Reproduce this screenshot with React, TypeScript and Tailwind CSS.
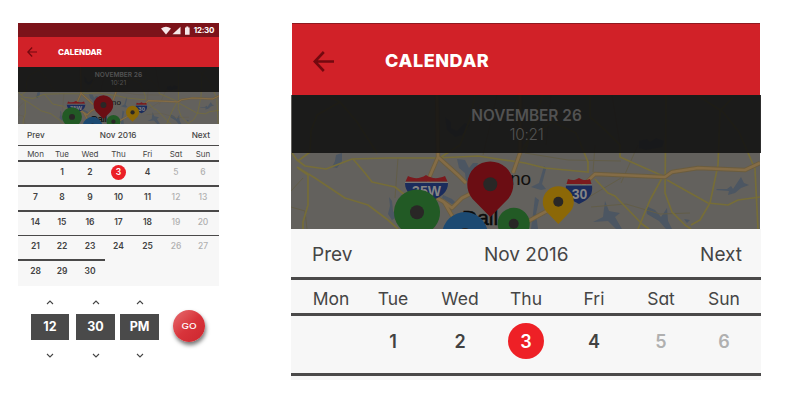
import React from "react";
import clsx from "clsx";

const WEEKDAYS = ["Mon", "Tue", "Wed", "Thu", "Fri", "Sat", "Sun"];
const WEEKS: (number | null)[][] = [
  [null, 1, 2, 3, 4, 5, 6],
  [7, 8, 9, 10, 11, 12, 13],
  [14, 15, 16, 17, 18, 19, 20],
  [21, 22, 23, 24, 25, 26, 27],
  [28, 29, 30, null, null, null, null],
];

const HIGHWAYS =
  "M146 0l1 62-9 21-3 14 18 10 14 24M147 62l20 18 8 8M229 0v58l-7 20M153 107l8 6 10-10 12-6M234 128l20-11 23-12 27-26 70 3 7-5 26-4 47 2 15-7";

function Pin({ x, y, r, tip, fill, dot }: { x: number; y: number; r: number; tip: number; fill: string; dot: number }) {
  return (
    <g>
      <path
        d={`M${x} ${tip}L${x - r * 0.78} ${y + r * 0.63}A${r} ${r} 0 1 1 ${x + r * 0.78} ${y + r * 0.63}Z`}
        fill={fill}
      />
      <circle cx={x} cy={y} r={dot} fill="#292726" />
    </g>
  );
}

function RoadMap({ className }: { className?: string }) {
  return (
    <svg viewBox="0 0 469 134" preserveAspectRatio="none" className={clsx("block", className)}>
      <rect width="469" height="134" fill="#63615d" />
      <g fill="#4c5662">
        <path d="M45 60l6-2v8l-5 7-5-1 3-6z" />
        <path d="M166 64l8 1 4 8 4-5 5 0-4 11-3 10-5-3-1-8-6-5z" />
        <path d="M98 102l3 4 1 10 4 6-5 3-4-6 2-8z" />
        <path d="M152 100l9 4 4 4-4 1-10-6z" />
        <path d="M253 71l2 3-4 15 4 5-5 1-10-3 8-4z" />
        <path d="M244 102l4 3-3 14 2 15h-7l2-15z" />
        <path d="M314 106l4 10 5 1 6 1-5 4 7 12h-6l-8-8-15 1 10-5z" />
        <path d="M355 111l9 4 6 7 6-9 1 13 4 8h-6l-7-8-12-7z" />
        <path d="M426 94l10 0 4-3 2 3 8-12 3 6 5 2-8 3-6 5-7 2 1-4-13-1z" />
        <path d="M393 124l6 1-3 3z" />
        <path d="M154 22l6 5v6l6 3 8-8 5 2-8 10-7 2-8-7z" />
        <path d="M348 46l8-2 3 3 6-4 8 3-2 6-16 3-7-2z" />
      </g>
      <g fill="none" stroke="#625d48" strokeWidth="1">
        <path d="M0 112l14 4 2 18M107 63l-3 40M304 50l-2 27M347 50l-17 38M300 112l35-3 34 10 30-1M206 0l-14 60M260 0l-5 50M321 0l8 50M0 96l12-13M330 83l-44 26M234 58l43 7 53 1" />
      </g>
      <g fill="none" stroke="#766d38" strokeWidth="1.700" strokeLinejoin="round">
        <path d="M1 58l5 7 8 6 21 3 26-10 36-1h48" />
        <path d="M6 72l18 11 30 20 23 7 20 15 10 9" />
        <path d="M7 73l10 7v30l-5 17v7" />
        <path d="M62 64l12 14 7 9 23 5 15 12" />
        <path d="M39 2l10 5 17 20 20 31M49 7l-23 13-6 16-1 21-12 9" />
        <path d="M184 0l-5 24-10 26-22 14M229 58l10-16 22-15 24 11 12 29v11" />
        <path d="M147 63l40-2 47 7 20 5 42 4M252 0l-9 26-9 32" />
        <path d="M299 0v22l15 13 15 15v12l18 8 25 11" />
        <path d="M375 0l-1 98 7 19 13 13 6 4M371 83l-12 22-12 29M304 84l13 14 7 3 27 28 7 5" />
        <path d="M376 85l41 23 20 2 10-5 22-3" />
        <path d="M406 0l26 17 16 20 16 37 3 60M442 2l-13 14-2 54-8 38-10 17-9 5" />
      </g>
      <g fill="none" strokeLinejoin="round">
        <path d={HIGHWAYS} stroke="#6c5d3e" strokeWidth="4.400" />
        <path d={HIGHWAYS} stroke="#846c46" strokeWidth="2.600" />
      </g>
      <text x="219" y="89.5" fontSize="19" fill="#11100f" fontFamily="Liberation Sans, sans-serif">no</text>
      <text x="171" y="130" fontSize="21" stroke="#0b0b0b" strokeWidth=".5" fill="#0b0b0b" fontFamily="Liberation Sans, sans-serif">Dall</text>
      <g>
        <path d="M114 88h43c0 9-6 14-21.500 20C120 102 114 97 114 88z" fill="#1b2c5c" />
        <path d="M114.500 86.500l2.500-5.500c6 3 12 3 18-1 6 4 12 4 19 1l2.500 5.500z" fill="#7a1a1e" />
        <path d="M114 87.500h43" stroke="#777" strokeWidth="1" />
        <text x="135.500" y="101" fontSize="14" fontWeight="700" textAnchor="middle" fill="#858585" fontFamily="Liberation Sans, sans-serif">35W</text>
      </g>
      <g>
        <path d="M275 90h26c1 9-2 14-13 19-11-5-14-10-13-19z" fill="#1b2c5c" />
        <path d="M275.500 89l1.500-5c4 2 8 1 11-1 3 2 7 3 11 1l1.500 5z" fill="#7a1a1e" />
        <path d="M275 90h26" stroke="#777" strokeWidth="1" />
        <text x="288.500" y="103.500" fontSize="14" fontWeight="700" textAnchor="middle" fill="#858585" fontFamily="Liberation Sans, sans-serif">30</text>
      </g>
      <Pin x={174} y={140} r={23} tip={172} fill="#1c4a72" dot={7} />
      <Pin x={222.7} y={128.700} r={16} tip={150} fill="#225a25" dot={5} />
      <Pin x={126} y={117.300} r={23} tip={150} fill="#225a25" dot={7} />
      <Pin x={267.300} y={106.700} r={15.500} tip={129} fill="#8c6807" dot={5} />
      <Pin x={199.300} y={89.300} r={23} tip={122} fill="#6b0d13" dot={7} />
    </svg>
  );
}

function BackArrow({ className }: { className?: string }) {
  return (
    <svg viewBox="0 0 21 21" className={className} fill="none" stroke="#73090f" strokeWidth="2.600">
      <path d="M10.800 1L1.800 10.500l9 9.500M1.800 10.500H21" />
    </svg>
  );
}

function Chevron({ down }: { down?: boolean }) {
  return (
    <svg viewBox="0 0 8 5" className={clsx("block h-[5px] w-2", down && "rotate-180")} fill="none" stroke="#454545" strokeWidth="1.100">
      <path d="M1 4l3-3 3 3" />
    </svg>
  );
}

function Rule({ className }: { className: string }) {
  return <div className={clsx("shrink-0 bg-[#4a4949]", className)} />;
}

function SmallWeek({ days }: { days: (number | null)[] }) {
  return (
    <div className="grid h-[23px] grid-cols-[27px_26px_30px_27px_31px_26px_28px] pl-1 text-center text-[8.500px] leading-[21px] font-semibold text-[#424242]">
      {days.map((d, i) => (
        <span key={i} className={clsx("flex h-[21px] items-center justify-center", i > 4 && "font-medium text-[#b0b0b0]")}>
          {d === 3 ? (
            <span className="flex size-[15px] items-center justify-center rounded-full bg-[#eb2027] text-white">3</span>
          ) : (
            d
          )}
        </span>
      ))}
    </div>
  );
}

function Phone() {
  return (
    <section className="flex h-[263px] w-[201px] flex-col bg-[#f7f7f7]">
      <div className="flex h-[14px] shrink-0 items-center justify-end bg-[#7c131a] pr-[5px] text-white">
        <svg viewBox="0 0 30 9" className="mr-[3px] h-[9px] w-[30px]" fill="#f6e9ea">
          <path d="M0 2.600Q5 -1.200 10 2.600L5 8.500z" />
          <path d="M19.500 .8v7.500H11.500z" />
          <path d="M24 1.500h1.300V.5h2v1h1.300v7.200H24z" />
        </svg>
        <span className="text-[8px] leading-[14px] font-bold tracking-[-0.3px]">12:30</span>
      </div>
      <div className="flex h-[30px] shrink-0 items-center bg-[#d12128] pl-[9px]">
        <BackArrow className="size-[10px]" />
        <h2 className="ml-[21px] text-[8px] font-extrabold tracking-[-0.05px] text-white">CALENDAR</h2>
      </div>
      <div className="relative h-[57px] shrink-0">
        <RoadMap className="h-[57px] w-[201px]" />
        <div className="absolute inset-x-0 top-0 flex h-[25px] flex-col items-center bg-[#111111]/88 pt-1 text-[6.600px] leading-[8px] text-[#525252]">
          <span className="font-semibold">NOVEMBER 26</span>
          <span>10:21</span>
        </div>
      </div>
      <div className="flex h-[21px] shrink-0 items-center justify-between pt-px pr-[9px] pl-[9px] text-[8.200px] font-medium text-[#454545]">
        <span>Prev</span>
        <span>Nov 2016</span>
        <span>Next</span>
      </div>
      <Rule className="h-px" />
      <div className="grid h-[14px] shrink-0 grid-cols-[27px_26px_30px_27px_31px_26px_28px] pl-1 text-center text-[8px] leading-[16px] text-[#454545]">
        {WEEKDAYS.map((d) => (
          <span key={d}>{d}</span>
        ))}
      </div>
      <Rule className="h-0.5" />
      <SmallWeek days={WEEKS[0]} />
      <Rule className="h-0.5" />
      <SmallWeek days={WEEKS[1]} />
      <Rule className="h-0.5" />
      <SmallWeek days={WEEKS[2]} />
      <Rule className="h-px" />
      <SmallWeek days={WEEKS[3]} />
      <Rule className="h-0.5 w-[87px]" />
      <SmallWeek days={WEEKS[4]} />
    </section>
  );
}

function TimePicker() {
  return (
    <section className="flex h-[60px] w-[201px] items-center pl-[13px] text-[12.500px] font-bold text-white">
      {[
        { v: "12", c: "w-[38px] mr-[7px]" },
        { v: "30", c: "w-[39px] mr-[5px]" },
        { v: "PM", c: "w-[39px] mr-[14px]" },
      ].map(({ v, c }) => (
        <div key={v} className={clsx("flex h-[60px] flex-col items-center pt-0.5", c)}>
          <Chevron />
          <span className="mt-[9px] mb-[13px] flex h-[26px] w-full items-center justify-center bg-[#4a4a4a] pt-px">{v}</span>
          <Chevron down />
        </div>
      ))}
      <button className="flex size-8 -translate-y-[2px] items-center justify-center rounded-full bg-linear-to-br from-[#e66a70] via-[#d8343b] to-[#cc252d] text-[8px] font-medium shadow-[1px_3px_4px_rgba(0,0,0,0.55)]">
        <span className="scale-x-125">GO</span>
      </button>
    </section>
  );
}

function LargeView() {
  return (
    <section className="flex h-[357px] w-[470px] flex-col">
      <div className="mr-px ml-px flex h-[72px] shrink-0 items-center border-t border-[#8e1a20] bg-[#d12128] pl-[21px]">
        <BackArrow className="mt-1 size-[21px]" />
        <h1 className="mt-0.5 ml-[51px] text-[18px] font-extrabold tracking-[0.600px] text-white">CALENDAR</h1>
      </div>
      <div className="relative h-[134px] shrink-0">
        <RoadMap className="h-[134px] w-[469px]" />
        <div className="absolute top-0 right-0 left-px flex h-[58px] flex-col items-center bg-[#111111]/88 pt-[11px] text-[15.400px] leading-[19px] text-[#525252]">
          <span className="font-semibold">NOVEMBER 26</span>
          <span className="font-light tracking-[-0.3px]">10:21</span>
        </div>
      </div>
      <div className="flex h-[48px] shrink-0 items-center justify-between bg-[#f7f7f7] pt-1 pr-[19px] pl-[21px] text-[19px] text-[#454545]">
        <span>Prev</span>
        <span>Nov 2016</span>
        <span>Next</span>
      </div>
      <Rule className="h-[3px]" />
      <div className="grid h-[33px] shrink-0 grid-cols-[64px_60px_74px_58px_78px_56px_70px] bg-[#f7f7f7] pl-2 text-center text-[17.500px] leading-[38px] text-[#454545]">
        {WEEKDAYS.map((d) => (
          <span key={d}>{d}</span>
        ))}
      </div>
      <Rule className="h-[3px]" />
      <div className="grid h-[57px] shrink-0 grid-cols-[64px_60px_74px_58px_78px_56px_70px] bg-[#f7f7f7] pl-2 text-[18px] font-semibold text-[#424242]">
        {WEEKS[0].map((d, i) => (
          <span key={i} className={clsx("flex h-[50px] items-center justify-center", i > 4 && "text-[#b0b0b0]")}>
            {d === 3 ? (
              <span className="flex size-9 items-center justify-center rounded-full bg-[#ee2026] text-white">3</span>
            ) : (
              d
            )}
          </span>
        ))}
      </div>
      <Rule className="h-[3px]" />
      <div className="h-1 shrink-0 bg-[#f7f7f7]" />
    </section>
  );
}

export default function App() {
  return (
    <main className="flex h-[409px] w-[792px] items-start gap-[72px] overflow-hidden bg-white pt-[23px] pl-[18px] font-['Inter',sans-serif] [font-feature-settings:'cv11']">
      <div className="flex flex-col gap-[12px]">
        <Phone />
        <TimePicker />
      </div>
      <LargeView />
    </main>
  );
}
